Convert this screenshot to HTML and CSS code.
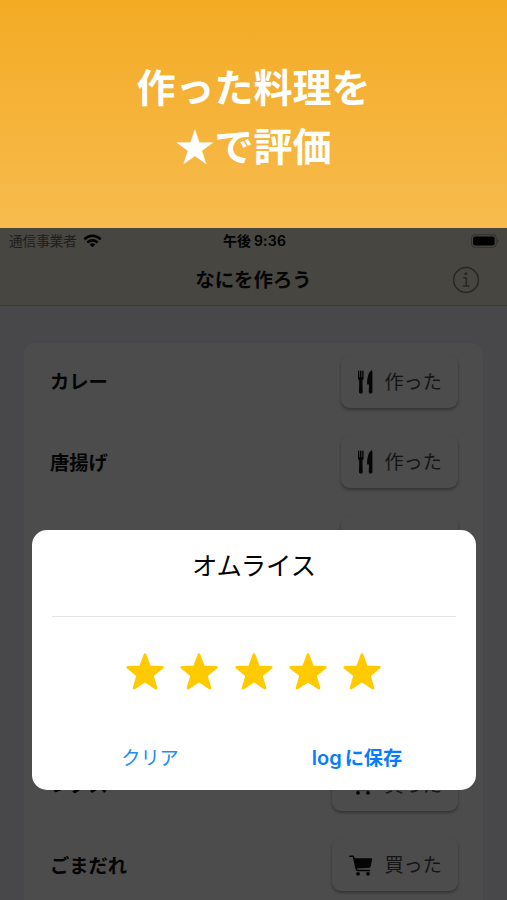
FILE: index.html
```html
<!DOCTYPE html>
<html lang="ja">
<head>
<meta charset="utf-8">
<title>なにを作ろう</title>
<link rel="stylesheet" href="styles.css">
</head>
<body>
<svg class="defs" width="0" height="0">
  <symbol id="fork" viewBox="0 0 16 24">
    <path d="M1 1.2C1 .1 2.3 .1 2.3 1.2V7H3V1.2C3 .1 4.5 .1 4.5 1.2V7H5.2V1.2C5.2 .1 6.6 .1 6.6 1.2V7.8C6.6 9.3 6.1 10 5.4 10.6L5.7 22C5.7 24 2 24 2 22L2.2 10.6C1.4 10 1 9.3 1 7.8Z M15.4 1.4V22C15.4 24 11.8 24 11.8 22L12 14.6H11C10.2 14.6 10 14 10.1 13C10.3 7.5 11.7 2 14.2 .6C14.9 .2 15.4 .5 15.4 1.4Z"/>
  </symbol>
  <symbol id="cart" viewBox="0 0 24 21">
    <path d="M.8 1.2H3.7Q4.4 1.2 4.6 2L7.3 14.2Q7.5 15.4 8.5 15.4H20.5" fill="none" stroke="currentColor" stroke-width="1.5" stroke-linecap="round"/>
    <path d="M5.2 3.2H22.3Q23.4 3.2 23.2 4.2L21.6 11.6Q21.4 12.8 20.2 12.8L7.2 13.6Z"/>
    <circle cx="9" cy="18.8" r="1.9"/><circle cx="19" cy="18.8" r="1.9"/>
  </symbol>
  <symbol id="star" viewBox="0 0 38 37">
    <path d="M19 1.8L23.4 13.8L36.2 14.3L26.2 22.4L29.9 35L19 27.9L8.1 35L11.8 22.4L1.8 14.3L14.6 13.8Z" stroke="currentColor" stroke-width="2.8" stroke-linejoin="round"/>
  </symbol>
</svg>

<header class="hero">
  <h1>作った料理を<br>★で評価</h1>
</header>

<main class="phone">
  <div class="topbar">
    <div class="status">
      <div class="carrier">通信事業者
        <svg class="wifi" viewBox="0 0 20 14">
          <path d="M1.4 5.1Q10-2.1 18.6 5.1M4.6 8.5Q10 4.1 15.4 8.5" fill="none" stroke="currentColor" stroke-width="2.7"/>
          <path d="M10 13.7L6.9 10.6Q10 8.3 13.1 10.6Z"/>
        </svg>
      </div>
      <div class="clock">午後<span>9:36</span></div>
      <svg class="battery" viewBox="0 0 30 14">
        <rect x=".6" y=".6" width="25.4" height="12.8" rx="3.6" fill="none" stroke="#30302d" stroke-width="1.1"/>
        <rect x="2.2" y="2.4" width="22.2" height="9.2" rx="2"/>
        <path d="M27.2 4.7Q30 7 27.2 9.3Z" fill="#30302d"/>
      </svg>
    </div>
    <div class="nav">
      <h2>なにを作ろう</h2>
      <svg class="info" viewBox="0 0 28 28">
        <g fill="none" stroke="currentColor" stroke-width="1.5">
          <circle cx="14" cy="14" r="12.4"/>
          <path d="M11.3 11.8H14.3V20M10.8 20H17.6"/>
        </g>
        <circle cx="13.9" cy="7.8" r="1.5"/>
      </svg>
    </div>
  </div>

  <div class="list">
    <div class="row"><b>カレー</b><div class="btn"><svg class="fork"><use href="#fork"/></svg>作った</div></div>
    <div class="row"><b>唐揚げ</b><div class="btn"><svg class="fork"><use href="#fork"/></svg>作った</div></div>
    <div class="row"><b>オムライス</b><div class="btn"><svg class="fork"><use href="#fork"/></svg>作った</div></div>
    <div class="row"></div>
    <div class="row"></div>
    <div class="row"><b>レタス</b><div class="btn buy"><svg class="cart"><use href="#cart"/></svg>買った</div></div>
    <div class="row"><b>ごまだれ</b><div class="btn buy"><svg class="cart"><use href="#cart"/></svg>買った</div></div>
  </div>
</main>

<section class="dialog">
  <h3>オムライス</h3>
  <div class="stars">
    <svg><use href="#star"/></svg><svg><use href="#star"/></svg><svg><use href="#star"/></svg><svg><use href="#star"/></svg><svg><use href="#star"/></svg>
  </div>
  <div class="actions"><span class="clear">クリア</span><span class="save"><span class="latin">log</span>に保存</span></div>
</section>
</body>
</html>
```
FILE: styles.css
```css
* { box-sizing: border-box; margin: 0; padding: 0; }
body {
  position: relative;
  width: 507px;
  height: 900px;
  overflow: hidden;
  font-family: Inter, "Noto Sans CJK JP", sans-serif;
  color: #050505;
}
svg { display: block; fill: currentColor; flex: none; }
.defs { position: absolute; }

.hero {
  height: 228px;
  padding-top: 56px;
  background: linear-gradient(#f3ab24, #f7bb4e);
  color: #fff;
  text-align: center;
}
.hero h1 {
  font: 700 39px/58.5px "Noto Sans CJK JP", sans-serif;
}

.phone { height: 672px; overflow: hidden; background: #48484b; }
.topbar {
  height: 78px;
  background: #474641;
  border-bottom: 1px solid #3e3d3a;
}
.status {
  display: grid;
  grid-template-columns: 1fr auto 1fr;
  align-items: center;
  height: 26px;
  padding: 0 7px 0 9px;
}
.carrier {
  display: flex;
  align-items: center;
  gap: 6px;
  font-size: 13.6px;
  line-height: 20px;
  color: #1d1d1b;
}
.wifi { width: 19px; height: 14px; color: #000; }
.clock { font-size: 14px; font-weight: 600; line-height: 20px; color: #000; }
.clock span { margin-left: 3px; letter-spacing: .2px; }
.battery { width: 29px; height: 14px; justify-self: end; color: #000; }
.nav {
  display: grid;
  grid-template-columns: 1fr auto 1fr;
  align-items: center;
  height: 51px;
  padding: 0 27px;
}
.nav h2 { grid-column: 2; font-size: 19.4px; font-weight: 600; line-height: 28px; }
.info { width: 28px; height: 28px; justify-self: end; color: #272724; }

.list {
  display: flow-root;
  height: 580px;
  margin: 37px 24px 0;
  padding: 0 25px 0 26px;
  background: #4c4c4c;
  border-radius: 10px 10px 0 0;
}
.row {
  display: flex;
  align-items: center;
  justify-content: space-between;
  height: 80.6px;
}
.row:first-child { margin-top: -2px; }
.row b { padding-top: 2px; font-size: 19.3px; font-weight: 600; line-height: 28px; }
.btn {
  display: flex;
  align-items: center;
  justify-content: flex-end;
  gap: 11.5px;
  width: 117px;
  height: 53px;
  padding: 1px 16px 0 0;
  border-radius: 9px;
  background: #4c4c4c;
  box-shadow: 0 2px 3px rgba(0, 0, 0, .32);
  color: #151515;
  font-size: 19.2px;
  line-height: 28px;
}
.buy { width: 126px; }
.fork { width: 16px; height: 24px; color: #050505; }
.cart { width: 24px; height: 21px; color: #050505; }

.dialog {
  position: absolute;
  top: 530px;
  left: 32px;
  width: 444px;
  height: 260px;
  padding: 0 20px;
  border-radius: 15px;
  background: #fff;
}
.dialog h3 {
  height: 87px;
  padding-top: 17px;
  border-bottom: 1px solid #e4e4e4;
  font-size: 25.4px;
  font-weight: 400;
  line-height: 38px;
  text-align: center;
}
.stars {
  display: flex;
  justify-content: center;
  gap: 16.2px;
  padding: 36px 1px 0 0;
  color: #ffcb00;
}
.stars svg { width: 38px; height: 37px; }
.actions {
  display: grid;
  grid-template-columns: 196px 1fr;
  padding-top: 54px;
  font-size: 19.2px;
  line-height: 28px;
  text-align: center;
}
.clear { color: #258bf7; }
.save { padding-left: 10px; color: #087cff; font-weight: 600; }
.latin { margin-right: 3px; font-size: 20px; line-height: 1; }
```
